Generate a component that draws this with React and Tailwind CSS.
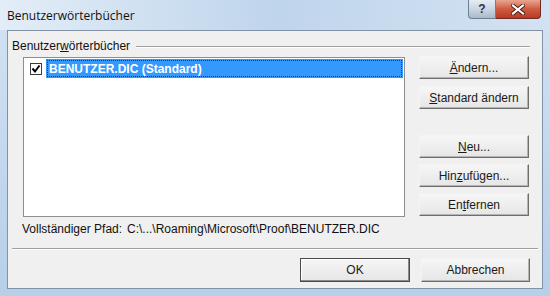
import React from "react";

const font = { fontFamily: '"Liberation Sans", Arial, sans-serif' };

function Btn({ children, className = "", isDefault = false }) {
  return (
    <div
      className={
        "flex items-center justify-center text-[12px] text-[#1a1a1a] bg-gradient-to-b from-[#f6f6f6] to-[#e6e6e6] border " +
        (isDefault
          ? "border-[#4a4a4a] shadow-[inset_-1px_-1px_0_#8a8a8a,inset_1px_1px_0_#ffffff] "
          : "border-t-[#f4f4f4] border-l-[#f4f4f4] border-r-[#6e6e6e] border-b-[#6e6e6e] shadow-[inset_-1px_-1px_0_#b4b4b4] ") +
        className
      }
    >
      {children}
    </div>
  );
}

export default function App() {
  return (
    <div
      style={font}
      className="w-[550px] h-[296px] overflow-hidden flex flex-col bg-gradient-to-b from-[#d4e3f3] via-[#c4d8ee] to-[#b7cfe9] relative"
    >
      {/* title bar */}
      <div className="h-[30px] flex items-start shrink-0 bg-gradient-to-r from-[#e3edf7] via-[#bfd5ec] to-[#d3e2f2]">
        <div className="pl-[7px] pt-[7px] text-[12px] text-[#111]" style={{ fontFamily: '"Open Sans", "Liberation Sans", sans-serif' }}>
          Benutzerwörterbücher
        </div>
        <div className="ml-auto mr-[9px] flex h-[19px]">
          <div className="w-[28px] h-[19px] rounded-bl-[4px] border border-[#6f7e90] border-t-0 bg-gradient-to-b from-[#e4ecf4] via-[#cbd6e2] to-[#a9b9cb] flex items-center justify-center text-[12px] font-bold text-[#2b3440]">
            ?
          </div>
          <div className="w-[45px] h-[19px] rounded-br-[4px] border border-[#6b2b22] border-t-0 border-l-0 bg-gradient-to-b from-[#e9a591] via-[#cf5a42] to-[#b83a22] flex items-center justify-center">
            <svg width="14" height="11" viewBox="0 0 14 11">
              <path d="M2 1.5 L12 9.5 M12 1.5 L2 9.5" stroke="#4a1a12" strokeWidth="4" strokeLinecap="square" />
              <path d="M2 1.5 L12 9.5 M12 1.5 L2 9.5" stroke="#ffffff" strokeWidth="2.2" strokeLinecap="square" />
            </svg>
          </div>
        </div>
      </div>

      {/* client area */}
      <div className="mx-[7px] h-[259px] border border-[#8393a6] bg-[#f0f0f0] flex flex-col text-[#111]">
        {/* group header */}
        <div className="mt-[9px] ml-[4px] mr-[12px] h-[13px] flex items-center">
          <span className="text-[12px] leading-[13px] pr-[6px]">
            Benutzer<u>w</u>örterbücher
          </span>
          <div className="flex-1 h-[2px] border-t border-t-[#a0a0a0] border-b border-b-[#ffffff]"></div>
        </div>

        {/* main row */}
        <div className="flex mt-[3px] ml-[15px]">
          <div className="mt-[1px] w-[382px] h-[160px] border border-[#8a8f96] bg-white pl-[2px] pt-[1px]">
            <div className="flex items-center h-[19px]">
              <div className="w-[20px] flex items-center justify-center">
                <div className="w-[12px] h-[12px] border border-[#3c3c3c] bg-white flex items-center justify-center">
                  <svg width="10" height="10" viewBox="0 0 10 10">
                    <path d="M1.5 4.5 L4 7.5 L8.5 1.5" fill="none" stroke="#000" strokeWidth="2" />
                  </svg>
                </div>
              </div>
              <div className="flex-1 h-[19px] bg-[#3399ff] mr-[1px] p-[1px]">
                <div className="h-full border border-dotted border-[#0f3a6e] flex items-center pl-[1px] text-[12px] font-bold text-white">
                  BENUTZER.DIC (Standard)
                </div>
              </div>
            </div>
          </div>
          <div className="ml-[14px] w-[110px] flex flex-col">
            <Btn className="h-[23px]"><span><u>Ä</u>ndern...</span></Btn>
            <Btn className="h-[23px] mt-[7px]"><span><u>S</u>tandard ändern</span></Btn>
            <Btn className="h-[23px] mt-[26px]"><span><u>N</u>eu...</span></Btn>
            <Btn className="h-[23px] mt-[6px]"><span>Hin<u>z</u>ufügen...</span></Btn>
            <Btn className="h-[23px] mt-[6px]"><span>En<u>t</u>fernen</span></Btn>
          </div>
        </div>

        {/* path row */}
        <div className="flex items-center mt-[5px] ml-[14px] h-[14px] text-[12px]">
          <span className="w-[105px]">Vollständiger Pfad:</span>
          <span>C:\...\Roaming\Microsoft\Proof\BENUTZER.DIC</span>
        </div>

        {/* separator */}
        <div className="mt-[12px] mx-[4px] h-[2px] border-t border-t-[#a0a0a0] border-b border-b-[#ffffff]"></div>

        {/* bottom buttons */}
        <div className="flex justify-end mt-[8px] mr-[12px] gap-[11px]">
          <Btn isDefault className="w-[110px] h-[24px]">OK</Btn>
          <Btn className="w-[109px] h-[24px]">Abbrechen</Btn>
        </div>
      </div>
    </div>
  );
}
